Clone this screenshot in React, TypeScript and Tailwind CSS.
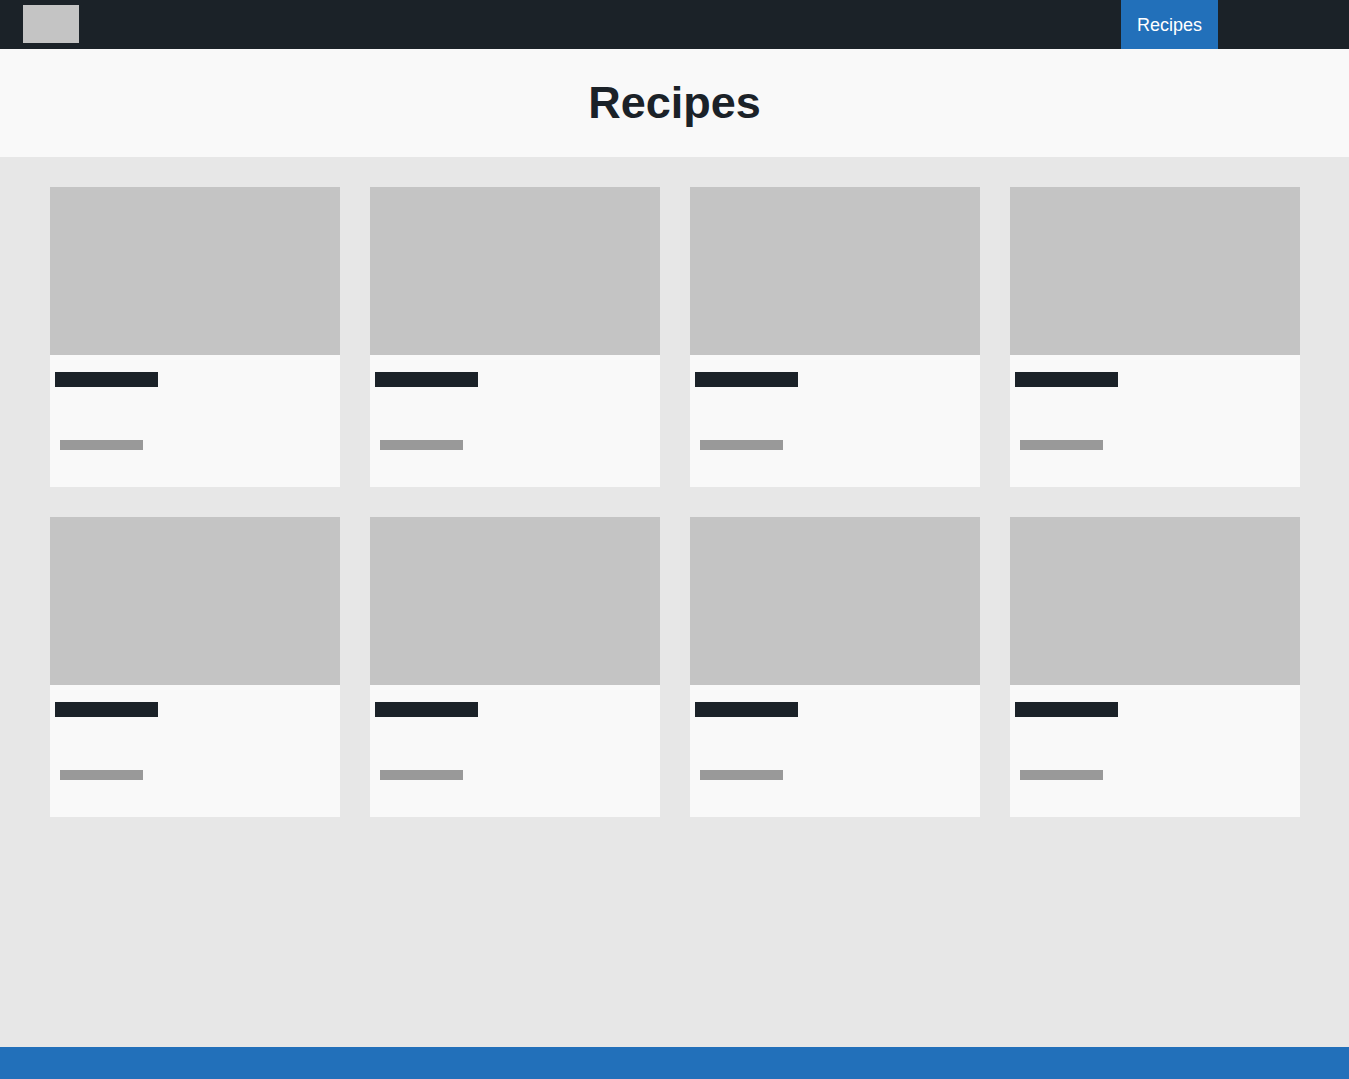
const recipes = [1, 2, 3, 4, 5, 6, 7, 8];

function RecipeCard() {
  return (
    <article className="h-[300px] bg-[#f9f9f9]">
      <div className="h-[168px] bg-[#c4c4c4]" />
      <div className="px-[5px] pt-[17px]">
        <div className="h-[15px] w-[103px] bg-[#1b2228]" />
        <div className="mt-[53px] ml-[5px] h-[10px] w-[83px] bg-[#999999]" />
      </div>
    </article>
  );
}

export default function App() {
  return (
    <div className="flex min-h-screen flex-col bg-[#e7e7e7] font-['Liberation_Sans',Arial,sans-serif] text-[#1b2228]">
      <header className="flex h-[49px] items-stretch justify-between bg-[#1b2228] pr-[131px] pl-[23px]">
        <div className="mt-[5px] h-[38px] w-[56px] bg-[#c4c4c4]" />
        <nav className="flex">
          <a href="#recipes" className="flex items-center bg-[#2270ba] px-4 text-lg text-white">
            Recipes
          </a>
        </nav>
      </header>
      <div className="flex h-[108px] items-center justify-center bg-[#f9f9f9]">
        <h1 className="text-[45px] leading-[52px] font-bold">Recipes</h1>
      </div>
      <main id="recipes" className="grid grow grid-cols-4 content-start gap-[30px] py-[30px] pr-[49px] pl-[50px]">
        {recipes.map((id) => (
          <RecipeCard key={id} />
        ))}
      </main>
      <footer className="h-8 bg-[#2270ba]" />
    </div>
  );
}
